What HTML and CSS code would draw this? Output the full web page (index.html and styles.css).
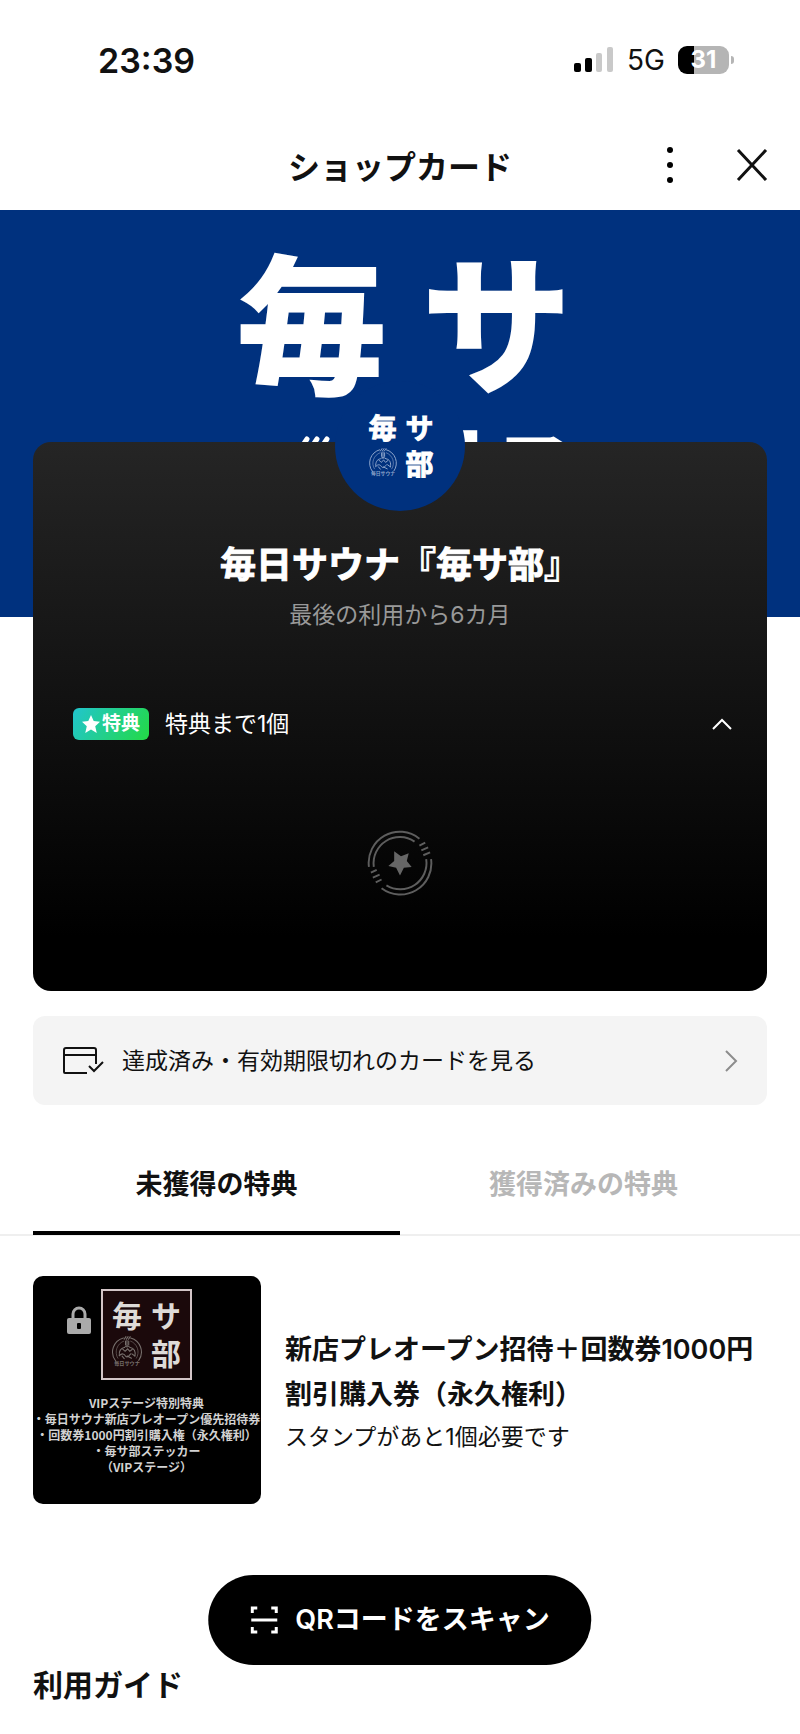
FILE: index.html
```html
<!DOCTYPE html>
<html lang="ja">
<head>
    <meta charset="UTF-8">
    <meta name="viewport" content="width=device-width, initial-scale=1.0">
    <title>ショップカード</title>
    <link rel="stylesheet" href="styles.css">
</head>
<body>
    <!-- sauna mark used in every logo -->
    <svg class="defs" aria-hidden="true">
        <symbol id="sauna" viewBox="0 0 150 150">
            <g fill="none" stroke="currentColor" stroke-width="5" stroke-linecap="round">
                <path d="M22 117A68 68 0 0 1 58 9M92 9A68 68 0 0 1 130 114"/>
                <path d="M32 104A54 54 0 0 1 60 24M92 24A54 54 0 0 1 119 104" stroke-width="3"/>
                <path d="M62 15L70 3M72 15L80 3M82 15L90 3M75 20V52M68 24V42M83 24V42"/>
                <path d="M39 92C36 72 46 56 62 54C70 46 82 46 90 54C108 56 117 74 112 94"/>
                <path d="M54 60L66 72L78 60L88 72L100 62M39 92C52 78 62 84 68 94C76 104 84 94 92 84M76 94L96 104M52 94L62 106M112 94L98 84"/>
            </g>
        </symbol>
    </svg>

    <div class="status-bar">
        <time class="clock">23:39</time>
        <div class="status-icons">
            <svg width="40" height="26" viewBox="0 0 40 26" aria-hidden="true">
                <rect x="0" y="16" width="7" height="9" rx="2"/>
                <rect x="11" y="11" width="7" height="14" rx="2"/>
                <rect x="22" y="6" width="6" height="19" rx="2" fill="#c9c9c9"/>
                <rect x="33" y="0" width="6" height="25" rx="2" fill="#c9c9c9"/>
            </svg>
            <span class="network">5G</span>
            <span class="battery">31</span>
        </div>
    </div>

    <header class="header">
        <h1>ショップカード</h1>
        <div class="header-actions">
            <button type="button" aria-label="メニュー">
                <svg width="8" height="38" viewBox="0 0 8 38"><circle cx="4" cy="4" r="3"/><circle cx="4" cy="19" r="3"/><circle cx="4" cy="34" r="3"/></svg>
            </button>
            <button type="button" aria-label="閉じる">
                <svg width="32" height="32" viewBox="0 0 32 32"><path d="M2 1L30 31M30 1L2 31" stroke="#111" stroke-width="3"/></svg>
            </button>
        </div>
    </header>

    <div class="hero">
        <div class="logo logo-large">
            <span>毎</span><span>サ</span>
            <svg class="mark"><use href="#sauna"/></svg><span>部</span>
        </div>
    </div>

    <main>
        <section class="card">
            <div class="avatar">
                <div class="logo logo-small">
                    <span>毎</span><span>サ</span>
                    <svg class="mark" viewBox="0 0 150 150"><use href="#sauna"/><text x="75" y="134" text-anchor="middle">毎日サウナ</text></svg><span>部</span>
                </div>
            </div>
            <h2>毎日サウナ『毎サ部』</h2>
            <p class="expiry">最後の利用から6カ月</p>

            <button type="button" class="progress" aria-expanded="true">
                <span class="badge">
                    <svg width="18" height="18" viewBox="0 0 20 20"><path fill="#fff" d="M10 0l3 6.800 7 .700-5.300 4.900L16.400 20 10 16l-6.400 4 1.700-7.600L0 7.500l7-.700z"/></svg>特典</span>
                <span class="remaining">特典まで1個</span>
                <svg width="22" height="14" viewBox="0 0 22 14"><path d="M2 12L11 3L20 12" fill="none" stroke="#fff" stroke-width="2"/></svg>
            </button>

            <svg class="stamp" viewBox="0 0 68 68" role="img" aria-label="スタンプ">
                <g fill="none" stroke="#5e5e5e" stroke-width="2">
                    <path d="M2 38A32 32 0 0 1 54 9M66 30A32 32 0 0 1 15 60"/>
                    <path d="M7 38A27 27 0 0 1 49 12M61 30A27 27 0 0 1 20 57"/>
                    <path d="M54 16l6-3M56 21l7-3M58 26l7-3M4 44l6-3M6 49l7-3M9 54l6-3"/>
                </g>
                <path fill="#666" d="M28 22l7 5 8-3-2 8 5 6-8 1-4 8-4-8-8-2 6-5z"/>
            </svg>
        </section>

        <a class="history" href="#">
            <svg width="42" height="30" viewBox="0 0 42 30" fill="none" stroke="#111" stroke-width="2">
                <path d="M25 27H3Q2 27 2 26V4Q2 2 4 2H32Q34 2 34 4V18M2 9H34M27 20L32 25L41 16"/>
            </svg>
            <span>達成済み・有効期限切れのカードを見る</span>
            <svg width="14" height="24" viewBox="0 0 14 24"><path d="M2 2L12 12L2 22" fill="none" stroke="#8c8c8c" stroke-width="2"/></svg>
        </a>

        <div class="tabs" role="tablist">
            <button type="button" role="tab" class="tab active" aria-selected="true">未獲得の特典</button>
            <button type="button" role="tab" class="tab" aria-selected="false">獲得済みの特典</button>
        </div>

        <article class="reward">
            <div class="thumb">
                <svg class="lock" width="24" height="28" viewBox="0 0 24 28">
                    <path d="M6 13V8a6 6 0 0 1 12 0v5" fill="none" stroke="#aaa" stroke-width="3"/>
                    <rect x="0" y="12" width="24" height="16" rx="2" fill="#aaa"/>
                    <rect x="10" y="17" width="4" height="6" rx="1" fill="#000"/>
                </svg>
                <div class="logo logo-thumb">
                    <span>毎</span><span>サ</span>
                    <svg class="mark" viewBox="0 0 150 150"><use href="#sauna"/><text x="75" y="134" text-anchor="middle">毎日サウナ</text></svg><span>部</span>
                </div>
                <p>VIPステージ特別特典<br>・毎日サウナ新店プレオープン優先招待券<br>・回数券1000円割引購入権（永久権利）<br>・毎サ部ステッカー<br>（VIPステージ）</p>
            </div>
            <div class="reward-text">
                <h3>新店プレオープン招待＋回数券1000円割引購入券（永久権利）</h3>
                <p>スタンプがあと1個必要です</p>
            </div>
        </article>

        <h2 class="guide">利用ガイド</h2>
    </main>

    <button type="button" class="scan">
        <svg width="28" height="28" viewBox="0 0 28 28" fill="none" stroke="#fff" stroke-width="3">
            <path d="M2 7V2H7M21 2H26V7M2 21V26H7M21 26H26V21M1 14H27"/>
        </svg>
        <span>QRコードをスキャン</span>
    </button>
</body>
</html>
```

FILE: styles.css
```css
* {
    box-sizing: border-box;
}
body {
    margin: 0;
    background-color: #fff;
    color: #111;
    font-family: Inter, "Noto Sans CJK JP", sans-serif;
}
h1, h2, h3, p {
    margin: 0;
}
button {
    padding: 0;
    border: none;
    background: none;
    color: inherit;
    font-family: inherit;
    cursor: pointer;
}
svg {
    display: block;
    flex-shrink: 0;
}
.defs {
    position: absolute;
    width: 0;
    height: 0;
}

/* status bar */
.status-bar {
    display: flex;
    justify-content: space-between;
    align-items: center;
    height: 120px;
    padding: 0 71px 0 98px;
}
.clock {
    font-size: 34px;
    font-weight: 600;
}
.status-icons {
    display: flex;
    align-items: center;
    gap: 13px;
}
.network {
    font-size: 28px;
}
.battery {
    position: relative;
    width: 51px;
    height: 28px;
    border-radius: 9px;
    background: linear-gradient(to right, #000 31%, #b5b5b5 31%);
    color: #fff;
    font-size: 24px;
    font-weight: 700;
    line-height: 28px;
    text-align: center;
}
.battery::after {
    content: "";
    position: absolute;
    top: 10px;
    right: -5px;
    width: 3px;
    height: 8px;
    border-radius: 0 3px 3px 0;
    background-color: #b5b5b5;
}

/* header */
.header {
    display: grid;
    grid-template-columns: 1fr auto 1fr;
    align-items: center;
    height: 90px;
    padding: 0 32px;
}
.header h1 {
    grid-column: 2;
    font-size: 32px;
    font-weight: 600;
}
.header-actions {
    display: flex;
    justify-content: flex-end;
    align-items: center;
    gap: 62px;
}

/* logo */
.logo {
    display: grid;
    place-items: center;
    color: #fff;
    font-family: "Noto Sans CJK JP", sans-serif;
    font-weight: 700;
    line-height: 1;
}
.logo-large {
    grid-template: 176px 176px / 185px 185px;
    font-size: 148px;
    -webkit-text-stroke: 4px #fff;
}
.logo-large .mark {
    width: 150px;
    height: 150px;
    margin-top: 36px;
}
.logo-small {
    grid-template: 36px 36px / 37px 37px;
    font-size: 28px;
    -webkit-text-stroke: 1px #fff;
}
.logo-small .mark {
    width: 30px;
    height: 30px;
    color: #8ea5cb;
}
.logo-thumb {
    grid-template: 38px 38px / 39px 39px;
    place-content: center;
    width: 91px;
    height: 91px;
    padding-bottom: 3px;
    border: 2px solid #d3c5c7;
    background-color: #1b090b;
    color: #dedbd8;
    font-size: 30px;
}
.logo-thumb .mark {
    width: 32px;
    height: 32px;
    color: #77706d;
}
.mark text {
    fill: currentColor;
    font-size: 24px;
    -webkit-text-stroke: 0;
}

.hero {
    display: flex;
    justify-content: center;
    height: 407px;
    padding: 19px 0 0 8px;
    overflow: hidden;
    background-color: #00317e;
}
main {
    padding: 0 33px;
}

/* stamp card */
.card {
    position: relative;
    display: flex;
    flex-direction: column;
    align-items: center;
    height: 549px;
    margin-top: -175px;
    border-radius: 18px;
    background: linear-gradient(#252525, #000 90%);
    color: #fff;
}
.avatar {
    display: grid;
    place-content: center;
    width: 130px;
    height: 130px;
    margin-top: -61px;
    padding: 0 0 2px 2px;
    border-radius: 50%;
    background-color: #00317e;
}
.card h2 {
    margin-top: 31px;
    font-size: 36px;
    line-height: 46px;
    -webkit-text-stroke: 1px #fff;
}
.expiry {
    margin-top: 10px;
    color: #999;
    font-size: 23px;
    line-height: 34px;
}
.progress {
    display: flex;
    align-items: center;
    gap: 16px;
    width: 100%;
    margin-top: 76px;
    padding: 0 34px 0 40px;
}
.badge {
    display: flex;
    justify-content: center;
    align-items: center;
    gap: 2px;
    width: 76px;
    height: 32px;
    border-radius: 6px;
    background: linear-gradient(120deg, #21c5ce, #23da45);
    font-size: 19px;
    font-weight: 700;
    line-height: 32px;
}
.remaining {
    flex: 1;
    font-size: 23px;
    line-height: 32px;
    text-align: left;
}
.stamp {
    width: 66px;
    height: 66px;
    margin-top: 90px;
}

.history {
    display: flex;
    align-items: center;
    gap: 18px;
    height: 89px;
    margin-top: 25px;
    padding: 0 29px;
    border-radius: 12px;
    background-color: #f4f4f4;
    color: #111;
    font-size: 23px;
    line-height: 32px;
    text-decoration: none;
}
.history span {
    flex: 1;
}

/* tabs */
.tabs {
    display: flex;
    margin: 28px -33px 0;
    padding: 0 33px;
    border-bottom: 2px solid #efefef;
}
.tab {
    flex: 1;
    height: 102px;
    margin-bottom: -1px;
    border-bottom: 4px solid transparent;
    color: #b7b7b7;
    font-size: 27px;
    font-weight: 600;
}
.tab.active {
    border-bottom-color: #000;
    color: #111;
}

/* rewards */
.reward {
    display: flex;
    align-items: center;
    gap: 24px;
    margin-top: 40px;
}
.thumb {
    position: relative;
    display: flex;
    flex-direction: column;
    align-items: center;
    flex-shrink: 0;
    width: 228px;
    height: 228px;
    padding: 13px 1px 0 0;
    border-radius: 10px;
    overflow: hidden;
    background-color: #000;
}
.thumb p {
    margin-top: 15px;
    color: #d2d2d2;
    font-family: "Noto Sans CJK JP", sans-serif;
    font-size: 12px;
    font-weight: 600;
    line-height: 16px;
    text-align: center;
    white-space: nowrap;
}
.lock {
    position: absolute;
    top: 30px;
    left: 34px;
}
.reward-text {
    padding-top: 3px;
}
.reward-text h3 {
    font-size: 27px;
    font-weight: 600;
    line-height: 45px;
}
.reward-text p {
    font-size: 23px;
    line-height: 40px;
}
.guide {
    margin-top: 159px;
    font-size: 30px;
    line-height: 44px;
}

/* floating button */
.scan {
    position: fixed;
    bottom: 69px;
    left: 50%;
    transform: translateX(-50%);
    display: flex;
    justify-content: center;
    align-items: center;
    gap: 17px;
    height: 90px;
    padding: 0 42px;
    border-radius: 45px;
    background-color: #000;
    color: #fff;
    font-size: 27px;
    font-weight: 600;
    line-height: 32px;
    white-space: nowrap;
}
```
